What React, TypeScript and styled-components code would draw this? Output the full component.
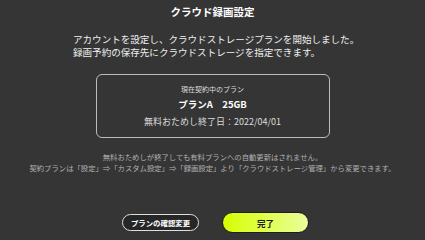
import React from 'react';
import styled, { createGlobalStyle } from 'styled-components';

const GlobalStyle = createGlobalStyle`
  html, body {
    margin: 0;
    padding: 0;
    background: #353535;
  }
  body {
    font-family: "Noto Sans CJK JP", "Noto Sans", sans-serif;
    color: #f2f2f2;
  }
`;

const Screen = styled.div`
  width: 425px;
  height: 239px;
  background: #353535;
  display: flex;
  flex-direction: column;
  align-items: center;
  box-sizing: border-box;
  padding-top: 4px;
`;

const Title = styled.h1`
  margin: 0;
  font-size: 10.5px;
  font-weight: 700;
  line-height: 16px;
  color: #ffffff;
`;

const Lead = styled.p`
  margin: 13px 0 0;
  align-self: flex-start;
  margin-left: 73px;
  font-size: 9.55px;
  line-height: 13px;
  color: #f0f0f0;
  white-space: nowrap;
`;

const PlanCard = styled.div`
  margin-top: 15px;
  width: 234px;
  height: 64px;
  box-sizing: border-box;
  border: 1.5px solid #bcbcbc;
  border-radius: 6px;
  display: flex;
  flex-direction: column;
  align-items: center;
  padding-top: 8px;
`;

const CardLabel = styled.div`
  font-size: 7px;
  line-height: 12px;
  color: #dddddd;
`;

const PlanName = styled.div`
  margin-top: 3px;
  font-size: 9.5px;
  font-weight: 700;
  line-height: 13px;
  color: #ffffff;
  white-space: pre;
`;

const TrialEnd = styled.div`
  margin-top: 4px;
  font-size: 9px;
  line-height: 13px;
  color: #dcdcdc;
`;

const Notes = styled.p`
  margin: 13px 0 0;
  text-align: center;
  font-size: 7.35px;
  line-height: 11px;
  color: #b0b0b0;
  white-space: nowrap;
`;

const Actions = styled.div`
  margin-top: auto;
  margin-bottom: 6px;
  padding-left: 6px;
  display: flex;
  align-items: center;
  gap: 23px;
`;

const Button = styled.button<{ $primary?: boolean }>`
  font-family: "Noto Sans CJK JP", "Noto Sans", sans-serif;
  font-weight: 700;
  cursor: pointer;
  box-sizing: border-box;
  border-radius: 999px;
  padding: 0;
  display: flex;
  align-items: center;
  justify-content: center;
  width: ${p => (p.$primary ? '87px' : '77px')};
  height: ${p => (p.$primary ? '21px' : '17px')};
  font-size: ${p => (p.$primary ? '8.5px' : '7.4px')};
  color: ${p => (p.$primary ? '#1c1c1c' : '#ffffff')};
  background: ${p =>
    p.$primary ? 'linear-gradient(90deg, #d6ff00 0%, #eaff9c 100%)' : '#262626'};
  border: ${p => (p.$primary ? '1px solid #1e1e1e' : '1.5px solid #dedede')};
`;
Button.defaultProps = {
  type: 'button',
};

export default function App() {
  return (
    <Screen>
      <GlobalStyle />
      <Title>クラウド録画設定</Title>
      <Lead>
        アカウントを設定し、クラウドストレージプランを開始しました。
        <br />
        録画予約の保存先にクラウドストレージを指定できます。
      </Lead>
      <PlanCard>
        <CardLabel>現在契約中のプラン</CardLabel>
        <PlanName>{'プランA　25GB'}</PlanName>
        <TrialEnd>無料おためし終了日：2022/04/01</TrialEnd>
      </PlanCard>
      <Notes>
        無料おためしが終了しても有料プランへの自動更新はされません。
        <br />
        契約プランは「設定」⇒「カスタム設定」⇒「録画設定」より「クラウドストレージ管理」から変更できます。
      </Notes>
      <Actions>
        <Button>プランの確認変更</Button>
        <Button $primary>完了</Button>
      </Actions>
    </Screen>
  );
}
